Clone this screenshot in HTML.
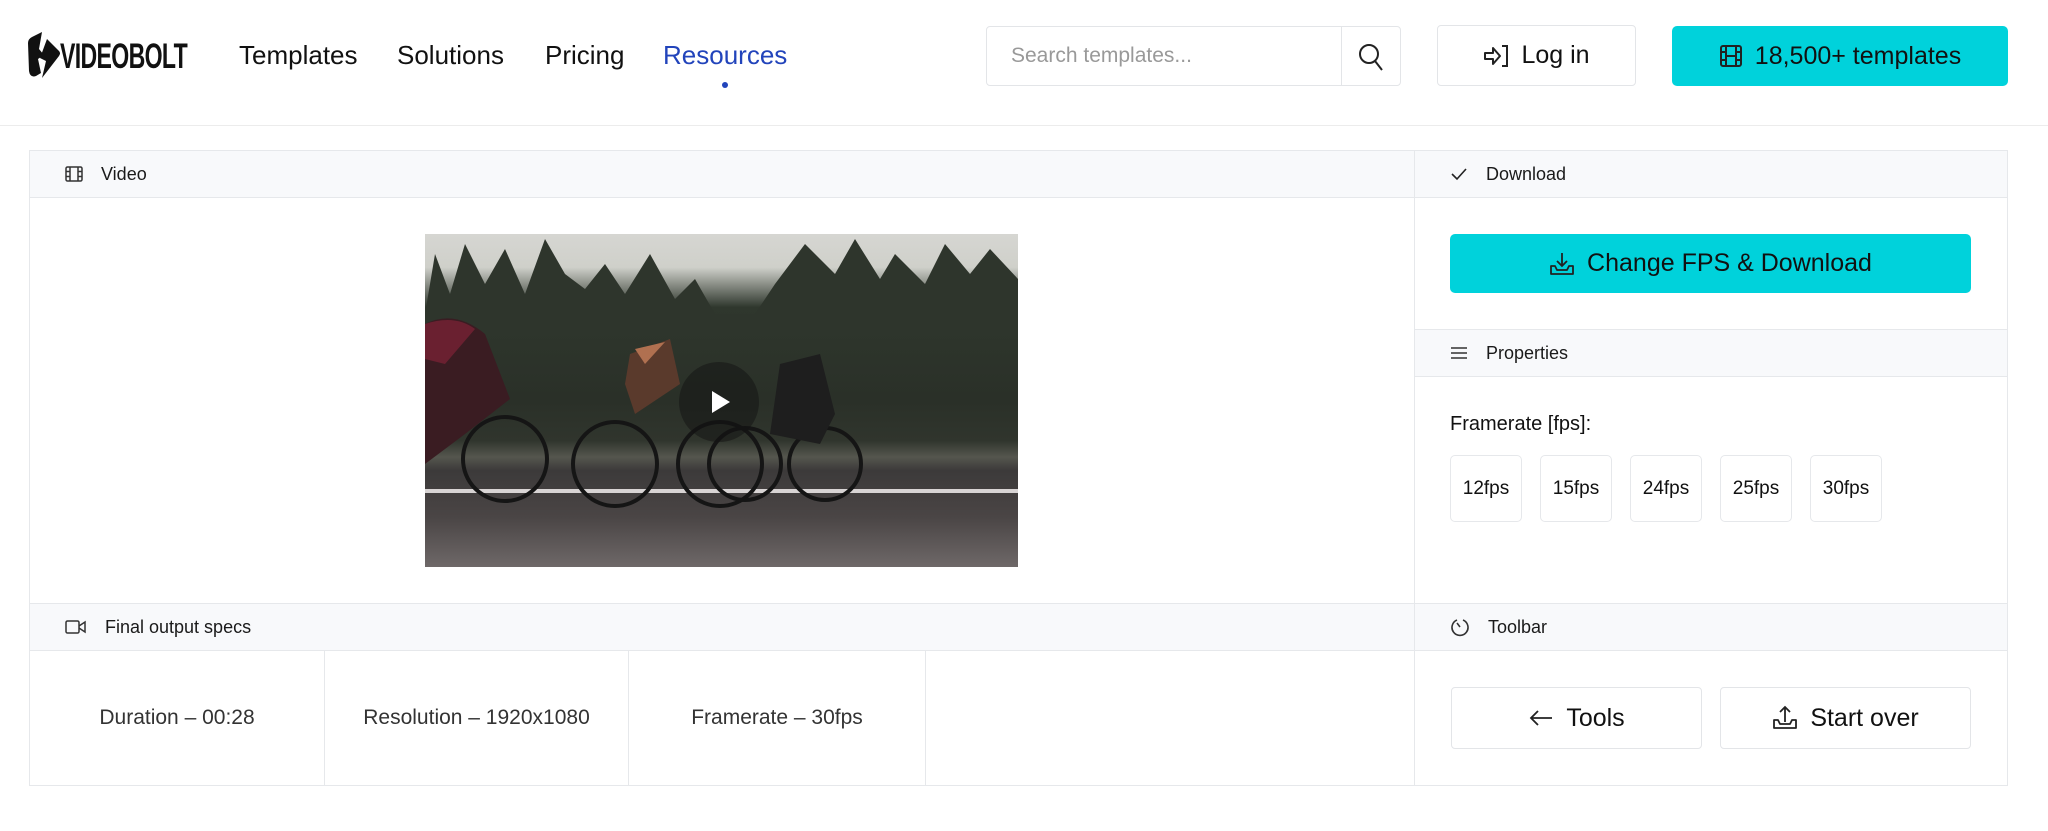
<!DOCTYPE html>
<html><head><meta charset="utf-8"><style>
*{box-sizing:border-box;margin:0;padding:0}
body{width:2048px;height:831px;background:#fff;font-family:"Liberation Sans",sans-serif;color:#111;position:relative;overflow:hidden}
.a{position:absolute}
.hdr{left:0;top:0;width:2048px;height:126px;border-bottom:1px solid #ececec}
.nav{top:40px;font-size:26px;color:#111}
.box{border:1px solid #e3e5e8;border-radius:4px;background:#fff}
.ph{background:#f8f9fb;border-bottom:1px solid #e6e8eb;border-top:1px solid #e6e8eb;font-size:18px;color:#1a1a1a;display:flex;align-items:center}
.ph svg{margin-right:18px}
.fps{width:72px;height:67px;top:455px;border:1px solid #e6e8eb;border-radius:5px;font-size:19px;display:flex;align-items:center;justify-content:center;color:#111}
.spec{top:650px;height:135px;display:flex;align-items:center;justify-content:center;font-size:21px;color:#333;border-right:1px solid #e6e8eb}
.btn{display:flex;align-items:center;justify-content:center;font-size:25px;color:#111}
</style></head><body>
<div class="a hdr"></div>
<!-- logo -->
<svg class="a" style="left:27px;top:31px" width="34" height="48" viewBox="0 0 34 48"><path d="M15 1 L5 6 Q1 8 1 12 L2 40 Q3 47 9 45 L14 42 L11 28 L17 24 L12 18 Z" fill="#111"/><path d="M20 8 L32 20 Q34 22 32 25 L15 47 L19 30 L13 27 Z" fill="#111"/></svg>
<div class="a" style="left:60px;top:37px;font-size:35px;font-weight:bold;letter-spacing:-1px;transform:scaleX(0.66);transform-origin:left;color:#111">VIDEOBOLT</div>
<div class="a nav" style="left:239px">Templates</div>
<div class="a nav" style="left:397px">Solutions</div>
<div class="a nav" style="left:545px">Pricing</div>
<div class="a nav" style="left:663px;color:#2244bb">Resources</div>
<div class="a" style="left:722px;top:82px;width:6px;height:6px;border-radius:3px;background:#2244bb"></div>
<!-- search -->
<div class="a box" style="left:986px;top:26px;width:415px;height:60px"></div>
<div class="a" style="left:1341px;top:27px;width:1px;height:58px;background:#e3e5e8"></div>
<div class="a" style="left:1011px;top:44px;font-size:21px;color:#999">Search templates...</div>
<svg class="a" style="left:1357px;top:42px" width="28" height="30" viewBox="0 0 28 30"><circle cx="12" cy="12" r="9" fill="none" stroke="#222" stroke-width="2"/><path d="M18 19 L25 28" stroke="#222" stroke-width="2"/></svg>
<div class="a box btn" style="left:1437px;top:25px;width:199px;height:61px"><svg width="28" height="26" viewBox="0 0 28 26" style="margin-right:10px"><path d="M2 10 H10 V5 L17 13 L10 21 V16 H2 Z" fill="none" stroke="#222" stroke-width="2" stroke-linejoin="round"/><path d="M19 3 H24 V23 H19" fill="none" stroke="#222" stroke-width="2"/></svg>Log in</div>
<div class="a btn" style="left:1672px;top:26px;width:336px;height:60px;background:#00d2db;border-radius:5px;font-size:25px"><svg width="24" height="24" viewBox="0 0 24 24" style="margin-right:12px"><rect x="2" y="2" width="20" height="20" rx="2" fill="none" stroke="#222" stroke-width="2"/><path d="M7 2V22M17 2V22M2 8H7M2 16H7M17 8H22M17 16H22M7 12H17" stroke="#222" stroke-width="2"/></svg>18,500+ templates</div>
<!-- main panel -->
<div class="a" style="left:29px;top:150px;width:1979px;height:636px;border:1px solid #e6e8eb"></div>
<div class="a ph" style="left:29px;top:150px;width:1386px;height:48px;padding-left:36px"><svg width="18" height="16" viewBox="0 0 18 16"><rect x="1" y="1" width="16" height="14" rx="1.5" fill="none" stroke="#333" stroke-width="1.5"/><path d="M5 1V15M13 1V15M1 5.5H5M1 10.5H5M13 5.5H17M13 10.5H17" stroke="#333" stroke-width="1.5"/></svg>Video</div>
<div class="a ph" style="left:1414px;top:150px;width:594px;height:48px;padding-left:36px;border-right:1px solid #e6e8eb"><svg width="18" height="14" viewBox="0 0 18 14"><path d="M2 7 L7 12 L16 2" fill="none" stroke="#222" stroke-width="1.6"/></svg>Download</div>
<!-- video -->
<div class="a" style="left:425px;top:234px;width:593px;height:333px;overflow:hidden;background:linear-gradient(180deg,#d6d6d2 0%,#cfd0ca 10%,#2f372d 22%,#2a3028 50%,#30352d 62%,#55564e 67%,#3c3a3a 71%,#4a4545 85%,#6e6868 100%)">
<svg class="a" style="left:0;top:0" width="593" height="333" viewBox="0 0 593 333">
<g fill="#2e352c"><path d="M0 80 L10 20 L25 60 L40 10 L60 50 L80 15 L100 60 L120 5 L140 40 L160 55 L180 30 L200 60 L225 20 L250 65 L270 45 L290 80 L330 80 L350 50 L380 10 L410 40 L430 5 L455 45 L470 20 L500 50 L520 10 L545 40 L565 15 L593 45 L593 100 L0 100Z"/></g>
<path d="M0 255 H593 V259 H0Z" fill="#d8d4d4"/>
<g fill="none" stroke="#151515" stroke-width="4"><circle cx="80" cy="225" r="42"/><circle cx="190" cy="230" r="42"/><circle cx="295" cy="230" r="42"/><circle cx="320" cy="230" r="36"/><circle cx="400" cy="230" r="36"/></g>
<path d="M0 90 Q30 75 60 100 L85 165 L40 200 L0 230Z" fill="#3a1c22"/>
<path d="M0 90 Q30 80 50 95 L20 130 L0 125Z" fill="#6a2030"/>
<path d="M205 120 L245 105 L255 150 L210 180 L200 150Z" fill="#5a3a2c"/>
<path d="M210 115 L240 108 L220 130Z" fill="#b07050"/>
<path d="M355 130 L395 120 L410 180 L395 210 L345 200Z" fill="#1e1e1e"/>
<circle cx="294" cy="168" r="40" fill="#111" opacity=".5"/><path d="M287 157 L305 168 L287 179Z" fill="#fff"/></svg>
</div>
<!-- download btn -->
<div class="a btn" style="left:1450px;top:234px;width:521px;height:59px;background:#00d2db;border-radius:5px;font-size:25px"><svg width="26" height="26" viewBox="0 0 26 26" style="margin-right:12px"><path d="M13 2V15M8 10L13 15L18 10" fill="none" stroke="#222" stroke-width="1.8"/><path d="M2 15V23H24V15H20L18 19H8L6 15Z" fill="none" stroke="#222" stroke-width="1.8" stroke-linejoin="round"/></svg>Change FPS &amp; Download</div>
<div class="a ph" style="left:1414px;top:329px;width:594px;height:48px;padding-left:36px;border-right:1px solid #e6e8eb"><svg width="18" height="14" viewBox="0 0 18 14"><path d="M1 2H17M1 7H17M1 12H17" stroke="#333" stroke-width="1.5"/></svg>Properties</div>
<div class="a" style="left:1450px;top:413px;font-size:20px;color:#111">Framerate [fps]:</div>
<div class="a fps" style="left:1450px">12fps</div>
<div class="a fps" style="left:1540px">15fps</div>
<div class="a fps" style="left:1630px">24fps</div>
<div class="a fps" style="left:1720px">25fps</div>
<div class="a fps" style="left:1810px">30fps</div>
<!-- bottom headers -->
<div class="a ph" style="left:29px;top:603px;width:1386px;height:48px;padding-left:36px"><svg width="22" height="16" viewBox="0 0 22 16"><rect x="1" y="2" width="13" height="12" rx="1.5" fill="none" stroke="#333" stroke-width="1.5"/><path d="M14 7L20 3V13L14 9" fill="none" stroke="#333" stroke-width="1.5"/></svg>Final output specs</div>
<div class="a ph" style="left:1414px;top:603px;width:594px;height:48px;padding-left:36px;border-right:1px solid #e6e8eb"><svg width="20" height="20" viewBox="0 0 20 20"><path d="M7 3 A8 8 0 1 0 13 3" fill="none" stroke="#333" stroke-width="1.6"/><path d="M7 6 L10 10" stroke="#333" stroke-width="1.6"/></svg>Toolbar</div>
<div class="a" style="left:29px;top:150px;width:1px;height:636px;background:#e6e8eb"></div>
<div class="a" style="left:1414px;top:150px;width:1px;height:636px;background:#e6e8eb"></div>
<div class="a spec" style="left:30px;width:295px">Duration – 00:28</div>
<div class="a spec" style="left:325px;width:304px">Resolution – 1920x1080</div>
<div class="a spec" style="left:629px;width:297px">Framerate – 30fps</div>
<div class="a box btn" style="left:1451px;top:687px;width:251px;height:62px"><svg width="26" height="20" viewBox="0 0 26 20" style="margin-right:12px"><path d="M24 10H3M10 3L3 10L10 17" fill="none" stroke="#222" stroke-width="1.8"/></svg>Tools</div>
<div class="a box btn" style="left:1720px;top:687px;width:251px;height:62px"><svg width="26" height="26" viewBox="0 0 26 26" style="margin-right:12px"><path d="M13 17V2M8 7L13 2L18 7" fill="none" stroke="#222" stroke-width="1.8"/><path d="M2 15V23H24V15H20L18 19H8L6 15Z" fill="none" stroke="#222" stroke-width="1.8" stroke-linejoin="round"/></svg>Start over</div>
</body></html>
